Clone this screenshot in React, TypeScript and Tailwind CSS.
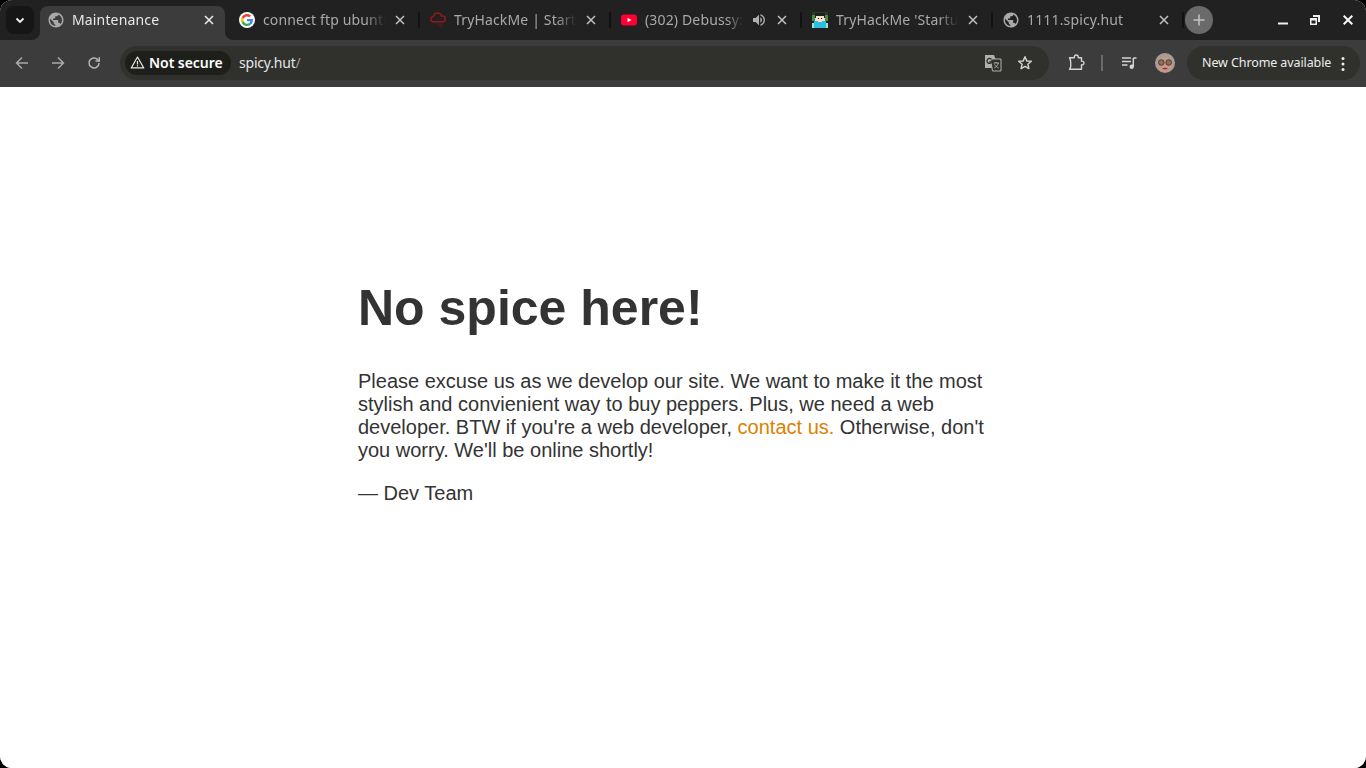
import React from "react";
import { MdPublic, MdVolumeUp } from "react-icons/md";

const Globe = () => <MdPublic className="w-[18px] h-[18px] -m-px text-[#a8a9ab]" />;

const GoogleG = () => (
  <svg viewBox="0 0 16 16" className="w-4 h-4">
    <circle cx="8" cy="8" r="8" fill="#fff" />
    <g transform="translate(2 2) scale(0.25)">
      <path fill="#EA4335" d="M24 9.500c3.500 0 6.700 1.200 9.200 3.600l6.900-6.900C35.900 2.400 30.500 0 24 0 14.600 0 6.500 5.400 2.600 13.200l8 6.200C12.500 13.700 17.800 9.500 24 9.500z" />
      <path fill="#4285F4" d="M47.500 24.500c0-1.600-.1-3.100-.4-4.500H24v9h13.200c-.6 3-2.300 5.500-4.800 7.200l7.700 6C44.600 37.900 47.500 31.800 47.500 24.500z" />
      <path fill="#FBBC05" d="M10.600 28.600c-.5-1.400-.8-3-.8-4.600s.3-3.200.8-4.600l-8-6.200C.9 16.500 0 20.100 0 24s.9 7.500 2.600 10.800l8-6.200z" />
      <path fill="#34A853" d="M24 48c6.500 0 11.900-2.100 15.900-5.800l-7.700-6c-2.100 1.400-4.900 2.300-8.200 2.300-6.200 0-11.500-4.200-13.400-9.900l-8 6.200C6.500 42.600 14.600 48 24 48z" />
    </g>
  </svg>
);

const RedCloud = () => (
  <svg viewBox="0 0 16 16" className="w-4 h-4" fill="none">
    <path d="M3.500 9.800C1.800 9.800.8 8.500.8 7.200c0-1.400 1-2.300 2.400-2.400C3.800 2.500 5.500 1 7.700 1c2 0 3.600 1.300 4.100 3.200.3 0 .5-.1.8-.1 1.500 0 2.700 1.200 2.700 2.800 0 1.600-1.200 2.900-2.700 2.900H3.500z" stroke="#8f1a1d" strokeWidth="1.500" />
    <path d="M7 12h6M9 13.600h4M10 15.200h2" stroke="#5c1a1c" strokeWidth="1" />
  </svg>
);

const YouTube = () => (
  <svg viewBox="0 0 16 16" className="w-4 h-4">
    <rect x="0" y="2.500" width="16" height="11" rx="3" fill="#ff0033" />
    <path d="M6.500 5.700v4.600L10.500 8z" fill="#fff" />
  </svg>
);

const PixelAvatar = () => (
  <svg viewBox="0 0 16 16" className="w-4 h-4" shapeRendering="crispEdges">
    <rect x="0" y="0" width="16" height="9" fill="#2a3a2c" />
    <rect x="0" y="3" width="3" height="6" fill="#4c8a42" />
    <rect x="13" y="3" width="3" height="6" fill="#4c8a42" />
    <rect x="3" y="1" width="10" height="3" fill="#1f1f1f" />
    <rect x="3" y="4" width="10" height="5" fill="#f2dfd2" />
    <rect x="3" y="4" width="1" height="2" fill="#1f1f1f" />
    <rect x="12" y="4" width="1" height="2" fill="#1f1f1f" />
    <rect x="6" y="6" width="1" height="1" fill="#1d1d1d" />
    <rect x="9" y="6" width="1" height="1" fill="#1d1d1d" />
    <rect x="2" y="9" width="12" height="7" fill="#2cc0dc" />
    <rect x="0" y="11" width="2" height="5" fill="#a8e0dc" />
    <rect x="14" y="11" width="2" height="5" fill="#a8e0dc" />
    <rect x="6" y="9" width="4" height="1" fill="#f2dfd2" />
  </svg>
);

const CloseX = ({ active }: { active?: boolean }) => (
  <svg viewBox="0 0 10 10" className="w-[10px] h-[10px] shrink-0 mx-[2px]" fill="none">
    <path d="M1 1l8 8M9 1l-8 8" stroke={active ? "#f0f0f0" : "#c2c2c2"} strokeWidth="1.500" />
  </svg>
);

type TabInfo = { title: string; icon: React.ReactNode; active?: boolean; audio?: boolean; sep?: boolean };

const tabs: TabInfo[] = [
  { title: "Maintenance", icon: <Globe />, active: true },
  { title: "connect ftp ubuntu server", icon: <GoogleG />, sep: true },
  { title: "TryHackMe | Startup", icon: <RedCloud />, sep: true },
  { title: "(302) Debussy: Clair de Lune", icon: <YouTube />, audio: true, sep: true },
  { title: "TryHackMe 'Startup' Room", icon: <PixelAvatar />, sep: true },
  { title: "1111.spicy.hut", icon: <Globe />, sep: true },
];

function Tab({ t }: { t: TabInfo }) {
  return (
    <div className="flex items-start shrink-0 h-[34px] w-[191px]">
      <div
        className={
          t.active
            ? "relative flex items-center w-[185px] h-[34px] pl-2 pr-[9px] pb-[6px] gap-2 rounded-t-[8px] bg-[#3c3c3c]"
            : "relative flex items-center w-[185px] h-[34px] pl-2 pr-[9px] pb-[6px] gap-2"
        }
      >
        {t.active && (
          <>
            <svg viewBox="0 0 8 8" className="absolute left-[-8px] bottom-0 w-2 h-2"><path d="M8 0v8H0a8 8 0 0 0 8-8z" fill="#3c3c3c" /></svg>
            <svg viewBox="0 0 8 8" className="absolute right-[-8px] bottom-0 w-2 h-2"><path d="M0 0v8h8a8 8 0 0 1-8-8z" fill="#3c3c3c" /></svg>
          </>
        )}
        <span className="w-4 h-4 flex items-center justify-center shrink-0">{t.icon}</span>
        <span
          className={
            "flex-1 min-w-0 overflow-hidden whitespace-nowrap text-[14px] leading-[20px] tracking-[0.15px] [mask-image:linear-gradient(to_right,black_84%,transparent_100%)] " +
            (t.active ? "text-[#e8e8e8]" : "text-[#a9a9a9]")
          }
        >
          {t.title}
        </span>
        {t.audio && <MdVolumeUp className="w-4 h-4 text-[#b0b0b0] shrink-0" />}
        <CloseX active={t.active} />
      </div>
      <span className="w-[6px] h-[28px] flex justify-center items-center">
        {t.sep && <span className="block w-[2px] h-[16px] bg-[#121212]" />}
      </span>
    </div>
  );
}

const ToolIcon = ({ children, className = "" }: { children: React.ReactNode; className?: string }) => (
  <span className={"flex items-center justify-center shrink-0 " + className}>{children}</span>
);

export default function App() {
  return (
    <div className="h-[768px] bg-black overflow-hidden font-['Noto_Sans',sans-serif]">
      <div className="h-full flex flex-col rounded-[12px] overflow-hidden bg-white">
        {/* Tab strip */}
        <div className="h-10 shrink-0 flex items-end bg-[#212121]">
          <div className="w-[40px] h-[34px] shrink-0 flex items-start pl-[6px]">
            <span className="w-7 h-7 rounded-[8px] bg-[#161616] flex items-center justify-center">
              <svg viewBox="0 0 12 12" className="w-3 h-3"><path d="M2.500 4.500 6 8l3.500-3.500" fill="none" stroke="#f2f2f2" strokeWidth="1.800" /></svg>
            </span>
          </div>
          {tabs.map((t, i) => <Tab key={i} t={t} />)}
          <div className="h-[34px] flex items-start -ml-px">
            <span className="w-7 h-7 rounded-full bg-[#6a6a6a] flex items-center justify-center">
              <svg viewBox="0 0 14 14" className="w-[14px] h-[14px]"><path d="M7 1.500v11M1.500 7h11" stroke="#c4c4c4" strokeWidth="1.500" /></svg>
            </span>
          </div>
          <div className="flex-1 h-10 flex items-center justify-end pr-[2px]">
            <span className="w-8 flex justify-center">
              <svg viewBox="0 0 10 10" className="w-[10px] h-[10px]"><path d="M0 8.500h10" stroke="#f0f0f0" strokeWidth="2" /></svg>
            </span>
            <span className="w-8 flex justify-center">
              <svg viewBox="0 0 10 10" className="w-[10px] h-[10px]"><path d="M3 0h7v7H8V2H3z" fill="#f0f0f0" /><path fillRule="evenodd" d="M0 3h7v7H0zM1.500 5.500v3h4v-3z" fill="#f0f0f0" /></svg>
            </span>
            <span className="w-8 flex justify-center ml-[1px]">
              <svg viewBox="0 0 10 10" className="w-[10px] h-[10px]"><path d="M.7.700l8.600 8.600M9.300.700.7 9.300" stroke="#f6f6f6" strokeWidth="2" /></svg>
            </span>
          </div>
        </div>

        {/* Toolbar */}
        <div className="h-[47px] shrink-0 flex items-start pt-[6px] bg-[#3c3c3c]">
          <div className="w-[120px] h-[34px] shrink-0 flex items-center pl-[4px]">
            <ToolIcon className="w-9">
              <svg viewBox="0 0 16 16" className="w-4 h-4" fill="none" stroke="#a9a9a9" strokeWidth="1.500"><path d="M14 8H2.500M8 2.500 2.500 8 8 13.500" /></svg>
            </ToolIcon>
            <ToolIcon className="w-9">
              <svg viewBox="0 0 16 16" className="w-4 h-4" fill="none" stroke="#a9a9a9" strokeWidth="1.500"><path d="M2 8h11.500M8 2.500 13.500 8 8 13.500" /></svg>
            </ToolIcon>
            <ToolIcon className="w-9">
              <svg viewBox="0 0 16 16" className="w-4 h-4" fill="none" stroke="#b5b5b5" strokeWidth="1.500"><path d="M13 8a5 5 0 1 1-1.500-3.600L13 6" /><path d="M13.300 2.200V6H9.500" /></svg>
            </ToolIcon>
          </div>

          <div className="w-[929px] h-[34px] shrink-0 rounded-full bg-[#30312c] flex items-center pl-[5px] pr-[16px]">
            <div className="h-6 w-[106px] rounded-full bg-[#1e1f1b] flex items-center pl-[5px] pb-[1px] text-white text-[14px] font-semibold tracking-[-0.05px] shrink-0 gap-[4px]">
              <svg viewBox="0 0 16 16" className="w-[15px] h-[15px] shrink-0" fill="none" stroke="#e8e8e8" strokeWidth="1.300"><path d="M8 2.200 14.700 13.800H1.300z" strokeLinejoin="round" /><path d="M8 6.500v3.500M8 11v1.300" /></svg>
              <span>Not secure</span>
            </div>
            <span className="ml-2 pb-[2px] text-[14px] text-[#e3e6ea] tracking-[-0.2px]">spicy.hut<span className="text-[#9a9a9a]">/</span></span>
            <span className="flex-1" />
            <ToolIcon className="w-[18px] h-[18px]">
              <svg viewBox="0 0 18 18" className="w-[18px] h-[18px]">
                <path d="M1 1h9l1.500 4-1 9H1z" fill="#b0b0b0" />
                <path d="M6.500 5H17v12H8.500z" fill="#30312c" stroke="#b0b0b0" strokeWidth="1" />
                <path d="M7.300 5.200a2.500 2.500 0 1 0 .5 2.700H5.200" fill="none" stroke="#30312c" strokeWidth="1.300" />
                <path d="M9.500 9h5.500M12 8v1M10.300 14c2-1 3.500-2.800 4-5M10.500 10.500c1 1.500 2.500 3 4.200 3.500" fill="none" stroke="#b5b5b5" strokeWidth="0.900" />
              </svg>
            </ToolIcon>
            <ToolIcon className="w-4 h-4 ml-[15px]">
              <svg viewBox="0 0 16 16" className="w-4 h-4" fill="none" stroke="#d0d0d0" strokeWidth="1.500" strokeLinejoin="round"><path d="M8 1.800 9.800 5.900 14.300 6.300 10.900 9.200 11.900 13.600 8 11.300 4.100 13.600 5.100 9.200 1.700 6.300 6.200 5.900z" /></svg>
            </ToolIcon>
          </div>

          <div className="flex-1 h-[34px] flex items-center">
            <ToolIcon className="w-[18px] h-[18px] ml-[18px]">
              <svg viewBox="0 0 18 18" className="w-[18px] h-[18px]" fill="none" stroke="#d4d4d4" strokeWidth="1.400" strokeLinejoin="round">
                <path d="M2.500 3.800H7.300C7.100 2 8 1 9.300 1s2.200 1 2 2.800h3.200v3.400c1.500-.3 2.500.5 2.500 1.800s-1 2.100-2.500 1.800v4.400H2.500c1-1.200 1.300-2.500 1.300-3.900S3.500 5 2.500 3.800z" />
              </svg>
            </ToolIcon>
            <span className="w-[2px] h-[16px] bg-[#6a6a6a] ml-[16px]" />
            <ToolIcon className="w-4 h-4 ml-[18px]">
              <svg viewBox="0 0 16 16" className="w-4 h-4" fill="none" stroke="#d4d4d4" strokeWidth="1.500"><path d="M1 3h9M1 6.500h9M1 10h5.500" /><path d="M12.300 3v8.500" /><path d="M12.300 3H15.500" /><circle cx="10.700" cy="11.800" r="2.200" fill="#d4d4d4" stroke="none" /></svg>
            </ToolIcon>
            <ToolIcon className="w-5 h-5 ml-[18px]">
              <svg viewBox="0 0 20 20" className="w-5 h-5">
                <circle cx="10" cy="10" r="10" fill="#a89c98" />
                <ellipse cx="10" cy="11.500" rx="7.500" ry="7.500" fill="#c39a88" />
                <circle cx="6.300" cy="9.500" r="2.800" fill="#8a6f5e" stroke="#4a3226" strokeWidth="0.900" />
                <circle cx="13.700" cy="9.500" r="2.800" fill="#8a6f5e" stroke="#4a3226" strokeWidth="0.900" />
                <path d="M7 15.500c1.500-1 4.500-1 6 0-1.500 1.200-4.500 1.200-6 0z" fill="#b3262c" />
              </svg>
            </ToolIcon>
            <div className="ml-[12px] w-[173px] h-[34px] rounded-full bg-[#30312c] flex items-center pl-[15px] pt-[1px] text-[12.500px] text-[#ececec] tracking-[-0.1px] whitespace-nowrap">
              <span>New Chrome available</span>
              <svg viewBox="0 0 4 16" className="w-1 h-4 ml-[10px]" fill="#ececec"><circle cx="2" cy="2.500" r="1.500" /><circle cx="2" cy="8" r="1.500" /><circle cx="2" cy="13.500" r="1.500" /></svg>
            </div>
          </div>
        </div>

        {/* Page */}
        <main className="flex-1 bg-white pt-[193px] font-['Liberation_Sans',Arial,sans-serif] text-[#333333]">
          <article className="w-[650px] mx-auto">
            <h1 className="text-[50px] font-bold leading-[57px] mb-[33px]">No spice here!</h1>
            <div className="text-[20px] leading-[23px]">
              <p className="mb-[20px]">
                Please excuse us as we develop our site. We want to make it the most stylish and convienient way to buy peppers. Plus, we need a web developer. BTW if you're a web developer, <a className="text-[#dc8100]">contact us.</a> Otherwise, don't you worry. We'll be online shortly!
              </p>
              <p>— Dev Team</p>
            </div>
          </article>
        </main>
      </div>
    </div>
  );
}
